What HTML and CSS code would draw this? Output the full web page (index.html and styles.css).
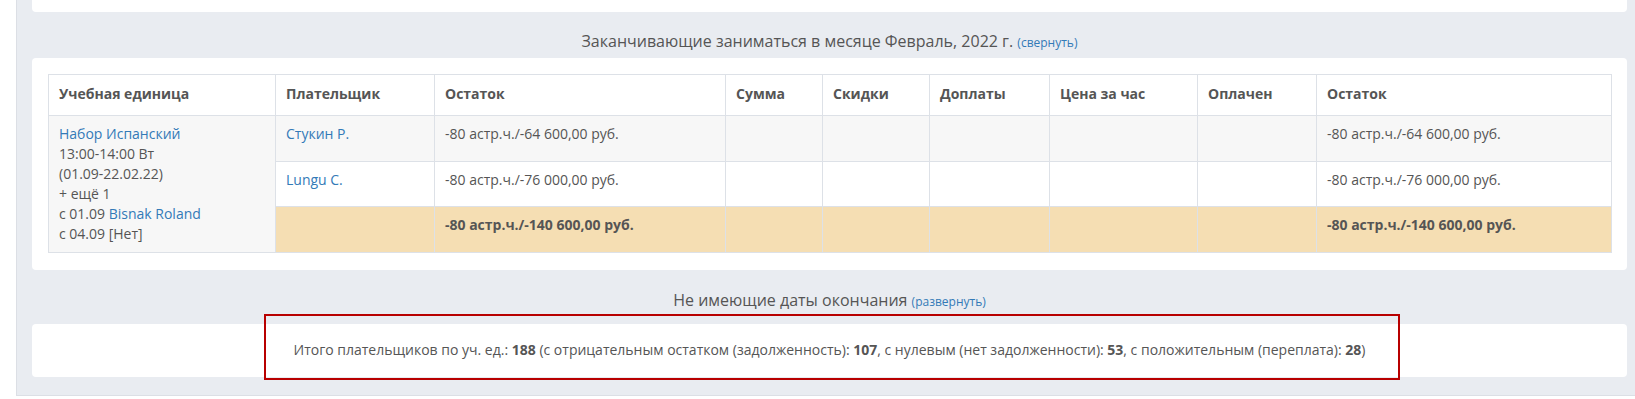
FILE: index.html
```html
<!DOCTYPE html>
<html lang="ru">
<head>
<meta charset="utf-8">
<title>Отчёт</title>
<link rel="stylesheet" href="styles.css">
</head>
<body>
<div class="main">
  <div class="card card-top"></div>

  <div class="section-title first">Заканчивающие заниматься в месяце Февраль, 2022 г. <a class="toggle" href="#">(свернуть)</a></div>

  <div class="card card-table">
    <table class="grid">
      <colgroup>
        <col class="c1"><col class="c2"><col class="c3"><col class="c4"><col class="c5"><col class="c6"><col class="c7"><col class="c8"><col class="c9">
      </colgroup>
      <thead>
        <tr class="head">
          <th>Учебная единица</th>
          <th>Плательщик</th>
          <th>Остаток</th>
          <th>Сумма</th>
          <th>Скидки</th>
          <th>Доплаты</th>
          <th>Цена за час</th>
          <th>Оплачен</th>
          <th>Остаток</th>
        </tr>
      </thead>
      <tbody>
        <tr class="odd r1">
          <td rowspan="3" class="unit">
            <a href="#">Набор Испанский</a><br>
            13:00-14:00 Вт<br>
            (01.09-22.02.22)<br>
            + ещё 1<br>
            с 01.09 <a href="#">Bisnak Roland</a><br>
            с 04.09 [Нет]
          </td>
          <td><a href="#">Стукин Р.</a></td>
          <td>-80 астр.ч./-64 600,00 руб.</td>
          <td></td><td></td><td></td><td></td><td></td>
          <td>-80 астр.ч./-64 600,00 руб.</td>
        </tr>
        <tr class="r2">
          <td><a href="#">Lungu C.</a></td>
          <td>-80 астр.ч./-76 000,00 руб.</td>
          <td></td><td></td><td></td><td></td><td></td>
          <td>-80 астр.ч./-76 000,00 руб.</td>
        </tr>
        <tr class="total r3">
          <td></td>
          <td><b>-80 астр.ч./-140 600,00 руб.</b></td>
          <td></td><td></td><td></td><td></td><td></td>
          <td><b>-80 астр.ч./-140 600,00 руб.</b></td>
        </tr>
      </tbody>
    </table>
  </div>

  <div class="section-title second">Не имеющие даты окончания <a class="toggle" href="#">(развернуть)</a></div>

  <div class="card card-summary">
    Итого плательщиков по уч. ед.: <b>188</b> (с отрицательным остатком (задолженность): <b>107</b>, с нулевым (нет задолженности): <b>53</b>, с положительным (переплата): <b>28</b>)
  </div>
</div>
<div class="highlight"></div>
</body>
</html>
```

FILE: styles.css
```css
html, body {
  margin: 0;
  padding: 0;
}
body {
  position: relative;
  background: #ffffff;
  font-family: "Open Sans", "Liberation Sans", sans-serif;
  font-size: 14px;
  line-height: 20px;
  color: #555555;
  width: 1635px;
  height: 399px;
  overflow: hidden;
}
a {
  color: #337ab7;
  text-decoration: none;
}
b {
  font-weight: 700;
}
.main {
  margin-left: 16px;
  height: 395px;
  border-left: 1px solid #dcdfe5;
  border-bottom: 1px solid #dcdfe5;
  background: #e9ecf1;
  padding: 0 8px 0 15px;
  width: 1595px;
}
.card {
  background: #ffffff;
  border-radius: 4px;
}
.card-top {
  height: 12px;
  border-radius: 0 0 4px 4px;
}
.section-title {
  text-align: center;
  font-size: 16px;
  line-height: 22px;
  height: 22px;
  color: #555555;
}
.section-title.first {
  padding: 18px 0 6px;
}
.section-title.second {
  padding: 19px 0 13px;
}
.toggle {
  font-size: 12px;
  line-height: 12px;
}
.card-table {
  padding: 16px 16px 17px;
}
.grid {
  border-collapse: collapse;
  table-layout: fixed;
  width: 1563px;
}
.c1 { width: 227px; }
.c2 { width: 159px; }
.c3 { width: 291px; }
.c4 { width: 97px; }
.c5 { width: 107px; }
.c6 { width: 120px; }
.c7 { width: 148px; }
.c8 { width: 119px; }
.c9 { width: 295px; }
.grid th,
.grid td {
  border: 1px solid #dde1e7;
  text-align: left;
  vertical-align: top;
}
.grid tr.head { height: 41px; }
.grid tr.r1 { height: 46px; }
.grid tr.r2 { height: 45px; }
.grid tr.r3 { height: 46px; }
.grid th {
  padding: 9px 10px 0;
  font-weight: 700;
  color: #555555;
}
.grid td {
  padding: 8px 10px 0;
}
.grid tr.odd td {
  background: #f7f7f7;
}
.grid tr.total td {
  background: #f5deb3;
}
.card-summary {
  padding: 16px 15px 17px;
  text-align: center;
}
.highlight {
  position: absolute;
  left: 264px;
  top: 314px;
  width: 1132px;
  height: 62px;
  border: 2px solid #b80000;
}
```
